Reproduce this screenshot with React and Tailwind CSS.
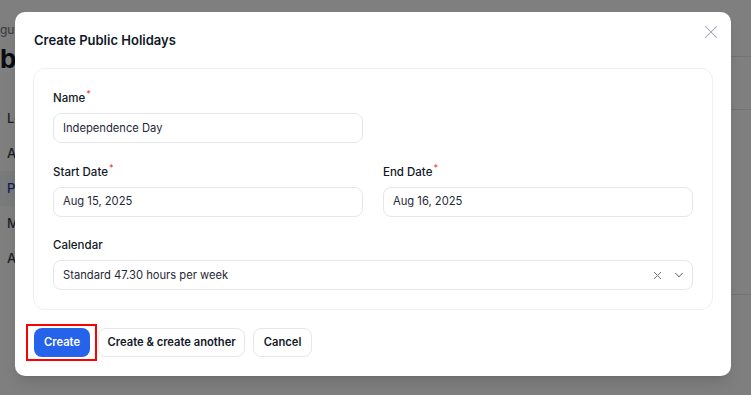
import { X, ChevronDown } from "lucide-react";

function Label({ children, required }) {
  return (
    <div className="flex h-[18px] items-center text-[11.5px] font-medium leading-[18px] text-[#111827]">
      <span>{children}</span>
      {required && <span className="-mt-2 ml-px text-[9px] text-[#ef4444]">*</span>}
    </div>
  );
}

function Field({ label, required, value }) {
  return (
    <div className="flex flex-col gap-[6px]">
      <Label required={required}>{label}</Label>
      <div className="flex h-[30px] items-center rounded-lg border border-[#e5e7eb] bg-white px-[9px] text-[11.2px] text-[#1f2937]">
        {value}
      </div>
    </div>
  );
}

export default function App() {
  const navItems = ["Leaves", "Attendance", "Public Holidays", "My Team", "Approvals"];

  return (
    <div className="relative h-[395px] w-full overflow-hidden bg-white font-['Inter',sans-serif]">
      {/* page behind the dialog */}
      <div className="flex h-full">
        <div className="w-[240px] shrink-0">
          <div className="pt-[22px] text-[12px] leading-4 text-[#6b7280]">guration / Public Holidays</div>
          <div className="mt-[5px] text-[26px] font-bold leading-8 text-[#111827]">blic Holidays</div>
          <div className="mt-[26px] flex flex-col">
            {navItems.map((item) => (
              <div
                key={item}
                className={
                  item === "Public Holidays"
                    ? "flex h-[35px] items-center bg-[#f3f4f6] px-[7px] text-[13px] font-medium text-[#1e40af]"
                    : "flex h-[35px] items-center px-[7px] text-[13px] font-medium text-[#374151]"
                }
              >
                {item}
              </div>
            ))}
          </div>
        </div>
        <div className="flex flex-1 flex-col">
          <div className="h-[57px] border-b border-[#e5e7eb]" />
          <div className="h-[53px] border-b border-[#e5e7eb]" />
          <div className="h-[185px] border-b border-[#e5e7eb]" />
        </div>
      </div>

      {/* overlay + dialog */}
      <div className="absolute inset-0 bg-black/50" />
      <div className="absolute left-[15px] top-[12px] w-[716px] rounded-[10px] bg-white px-[18px] pb-[19px] pt-[20px] shadow-lg">
        <div className="flex h-4 items-center justify-between pl-px">
          <h2 className="text-[13px] font-semibold leading-4 text-[#111827]">Create Public Holidays</h2>
          <X className="-mt-4 mr-[-9px] h-[22px] w-[22px] text-[#9ca3af]" strokeWidth={1.1} />
        </div>

        <div className="mt-[20px] flex flex-col gap-[19.5px] rounded-xl border border-[#eeeff1] px-[19px] pb-[19px] pt-[20px]">
          <div className="grid grid-cols-2 gap-5">
            <Field label="Name" required value="Independence Day" />
          </div>
          <div className="grid grid-cols-2 gap-5">
            <Field label="Start Date" required value="Aug 15, 2025" />
            <Field label="End Date" required value="Aug 16, 2025" />
          </div>
          <div className="flex flex-col gap-[6px]">
            <Label>Calendar</Label>
            <div className="flex h-[30px] items-center justify-between rounded-lg border border-[#e5e7eb] bg-white pl-[9px] pr-[6px] text-[11.2px] text-[#1f2937]">
              <span>Standard 47.30 hours per week</span>
              <div className="flex items-center gap-[8px] text-[#6b7280]">
                <X className="h-[13px] w-[13px]" strokeWidth={1.8} />
                <ChevronDown className="h-[14px] w-[14px]" strokeWidth={1.8} />
              </div>
            </div>
          </div>
        </div>

        <div className="mt-[18px] flex items-center gap-2 pl-px">
          <div className="relative">
            <button className="h-[29px] rounded-lg bg-[#2563eb] px-[10px] text-[11.2px] font-semibold text-white">
              Create
            </button>
            <div className="pointer-events-none absolute -bottom-[4px] -left-[8px] -right-[7px] -top-[4px] border-2 border-[#ff0000]" />
          </div>
          <button className="h-[29px] rounded-lg border border-[#e5e7eb] bg-white px-[8.5px] text-[11.2px] font-semibold text-[#111827]">
            Create &amp; create another
          </button>
          <button className="h-[29px] rounded-lg border border-[#e5e7eb] bg-white px-[9.5px] text-[11.2px] font-semibold text-[#111827]">
            Cancel
          </button>
        </div>
      </div>
    </div>
  );
}
